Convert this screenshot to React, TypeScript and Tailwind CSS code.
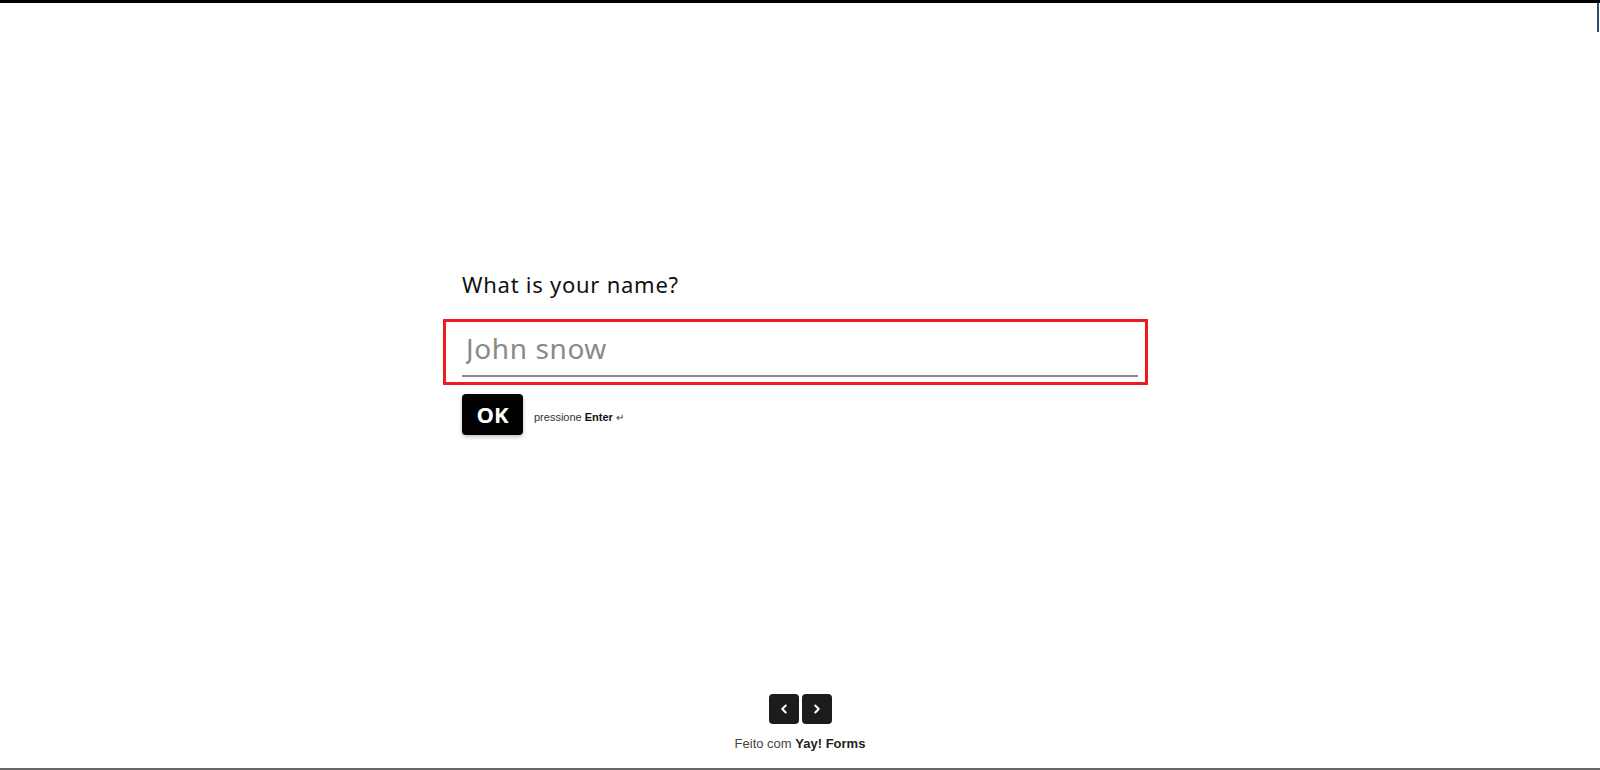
import { ChevronLeft, ChevronRight } from "lucide-react";

export default function App() {
  return (
    <div className="relative flex h-[770px] w-full flex-col border-t-[3px] border-b-2 border-t-black border-b-[#666] bg-white font-['Liberation_Sans',Arial,sans-serif]">
      <div className="absolute right-[1px] top-0 h-[29px] w-[2px] bg-[#2d4f73]" />

      <main className="h-[691px] shrink-0">
        <div className="mx-auto w-[676px] pt-[266px]">
          <h1 className="font-['Noto_Sans',sans-serif] text-[22px] leading-[30px] tracking-[0.75px] text-[#111]">What is your name?</h1>

          <div className="-ml-[19px] -mr-[10px] mt-[20px] border-[3px] border-[#ed1c24] pb-[5px] pl-[16px] pr-[7px] pt-[8px]">
            <input
              type="text"
              placeholder="John snow"
              className="block h-[47px] w-full border-b-2 border-[#8a8a8a] bg-transparent px-[4px] pb-[10px] font-['Noto_Sans',sans-serif] text-[28px] tracking-[0.6px] text-[#222] outline-none placeholder:text-[#8a8a8a]"
            />
          </div>

          <div className="mt-[9px] flex items-center">
            <button className="flex h-[41px] w-[61px] items-center justify-center rounded-[4px] bg-black font-['Open_Sans',sans-serif] text-[22px] font-bold text-white shadow-[0_2px_4px_rgba(0,0,0,0.25)]">
              OK
            </button>
            <span className="ml-[11px] mt-[5px] text-[11px] text-[#333]">
              pressione <b className="text-[#111]">Enter</b> <span className="text-[10px]">↵</span>
            </span>
          </div>
        </div>
      </main>

      <footer className="flex flex-col items-center pb-[16px]">
        <div className="flex gap-[3px]">
          <button className="flex h-[30px] w-[30px] items-center justify-center rounded-[4px] bg-[#1c1c1c] text-white">
            <ChevronLeft size={14} strokeWidth={3.5} />
          </button>
          <button className="flex h-[30px] w-[30px] items-center justify-center rounded-[4px] bg-[#1c1c1c] text-white">
            <ChevronRight size={14} strokeWidth={3.5} />
          </button>
        </div>
        <p className="mt-[12px] text-[13px] leading-[16px] text-[#444]">
          Feito com <b className="text-[#222]">Yay! Forms</b>
        </p>
      </footer>
    </div>
  );
}
